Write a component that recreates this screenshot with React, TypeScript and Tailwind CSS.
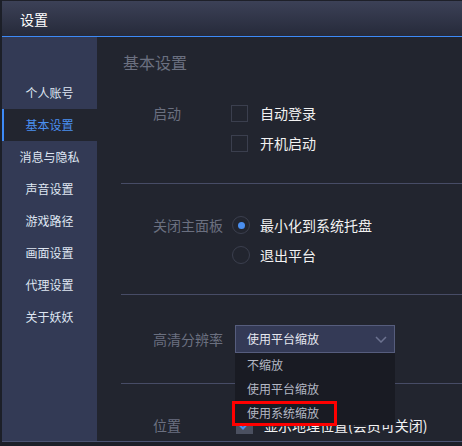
const menuItems = ["不缩放", "使用平台缩放", "使用系统缩放"];

const navItems = ["个人账号", "基本设置", "消息与隐私", "声音设置", "游戏路径", "画面设置", "代理设置", "关于妖妖"];

const Checkbox = ({ checked = false }: { checked?: boolean }) => (
  <div
    className={`w-[17px] h-[17px] border flex items-center justify-center ${
      checked ? "bg-[#4b5060] border-[#4b5060]" : "border-[#3b3f4e]"
    }`}
  >
    {checked && (
      <svg width="11" height="9" viewBox="0 0 11 9" fill="none">
        <path d="M1 4.5L4 7.5L10 1" stroke="#4a8ff0" strokeWidth="2" />
      </svg>
    )}
  </div>
);

const Radio = ({ checked = false }: { checked?: boolean }) => (
  <div className="w-[18px] h-[18px] rounded-full border border-[#3b3f4e] flex items-center justify-center">
    {checked && <div className="w-[7px] h-[7px] rounded-full bg-[#4a8ff0]" />}
  </div>
);

const Divider = () => <div className="ml-[24px] h-px bg-[#474c66]" />;

const App = () => {
  return (
    <div
      className="w-[462px] h-[446px] bg-[#1c1f28] overflow-hidden"
      style={{ fontFamily: '"Noto Sans CJK SC", "Noto Sans", sans-serif' }}
    >
      <div className="ml-[2px] w-[460px] h-[442px] flex flex-col border-b border-[#4b5272]">
        <div className="h-[36px] border-t border-[#1e2029] bg-gradient-to-b from-[#3c4157] to-[#262a3a] flex items-center pl-[18px]">
          <span className="text-[14px] text-white leading-none">设置</span>
        </div>
        <div className="h-px bg-[#3d8af7]" />

        <div className="flex flex-1 min-h-0">
          <div className="w-[95px] bg-[#333a55] pt-[40px] flex flex-col">
            {navItems.map((item, i) =>
              i === 1 ? (
                <div
                  key={item}
                  className="h-[32px] flex items-center justify-center bg-[#22252f] border-l-2 border-[#3d8af7] text-[12px] text-[#4a8ff0]"
                >
                  <span className="-ml-[2px]">{item}</span>
                </div>
              ) : (
                <div key={item} className="h-[32px] flex items-center justify-center text-[12px] text-[#dfe6f2]">
                  {item}
                </div>
              )
            )}
          </div>

          <div className="flex-1 bg-[#22252f] flex flex-col">
            <div className="mt-[14px] pl-[26px] h-[22px] leading-[22px] text-[16px] text-[#6b7080]">基本设置</div>

            <div className="mt-[25px] pl-[56px] flex">
              <div className="w-[78px] h-[30px] flex items-center text-[14px] text-[#6b7080]">启动</div>
              <div className="flex flex-col">
                <div className="h-[30px] flex items-center gap-[12px]">
                  <Checkbox />
                  <span className="text-[14px] text-[#f2f2f2]">自动登录</span>
                </div>
                <div className="h-[30px] flex items-center gap-[12px]">
                  <Checkbox />
                  <span className="text-[14px] text-[#f2f2f2]">开机启动</span>
                </div>
              </div>
            </div>

            <div className="mt-[25px]">
              <Divider />
            </div>

            <div className="mt-[26px] pl-[56px] flex">
              <div className="w-[79px] h-[30px] flex items-center text-[14px] text-[#6b7080]">关闭主面板</div>
              <div className="flex flex-col">
                <div className="h-[30px] flex items-center gap-[10px]">
                  <Radio checked />
                  <span className="text-[14px] text-[#f2f2f2]">最小化到系统托盘</span>
                </div>
                <div className="h-[30px] flex items-center gap-[10px]">
                  <Radio />
                  <span className="text-[14px] text-[#f2f2f2]">退出平台</span>
                </div>
              </div>
            </div>

            <div className="mt-[24px]">
              <Divider />
            </div>

            <div className="mt-[30px] pl-[56px] flex items-center relative z-10">
              <div className="w-[82px] text-[14px] text-[#6b7080]">高清分辨率</div>
              <div className="relative">
                <div className="w-[160px] h-[28px] bg-[#343a56] border border-[#565d7d] flex items-center justify-between pl-[11px] pr-[7px]">
                  <span className="text-[12px] text-[#e6e8f0]">使用平台缩放</span>
                  <svg width="12" height="7" viewBox="0 0 12 7" fill="none">
                    <path d="M1 1L6 6L11 1" stroke="#6c7290" strokeWidth="1.5" />
                  </svg>
                </div>
                <div className="absolute left-0 top-full w-[160px] bg-[#191b23] flex flex-col">
                  {menuItems.map((m) => (
                    <div key={m} className="h-[24px] flex items-center pl-[12px] text-[12px] text-[#b4b8c4]">
                      {m}
                    </div>
                  ))}
                  <div className="absolute left-[-3px] top-[48px] w-[105px] h-[25px] border-[3px] border-[#ff0000]" />
                </div>
              </div>
            </div>

            <div className="mt-[30px]">
              <Divider />
            </div>

            <div className="mt-[26px] pl-[56px] flex items-center h-[30px]">
              <div className="w-[83px] text-[14px] text-[#6b7080]">位置</div>
              <div className="flex items-center gap-[11px]">
                <Checkbox checked />
                <span className="text-[14px] text-[#f2f2f2] whitespace-nowrap">显示地理位置(会员可关闭)</span>
              </div>
            </div>
          </div>
        </div>
      </div>
    </div>
  );
};

export default App;
